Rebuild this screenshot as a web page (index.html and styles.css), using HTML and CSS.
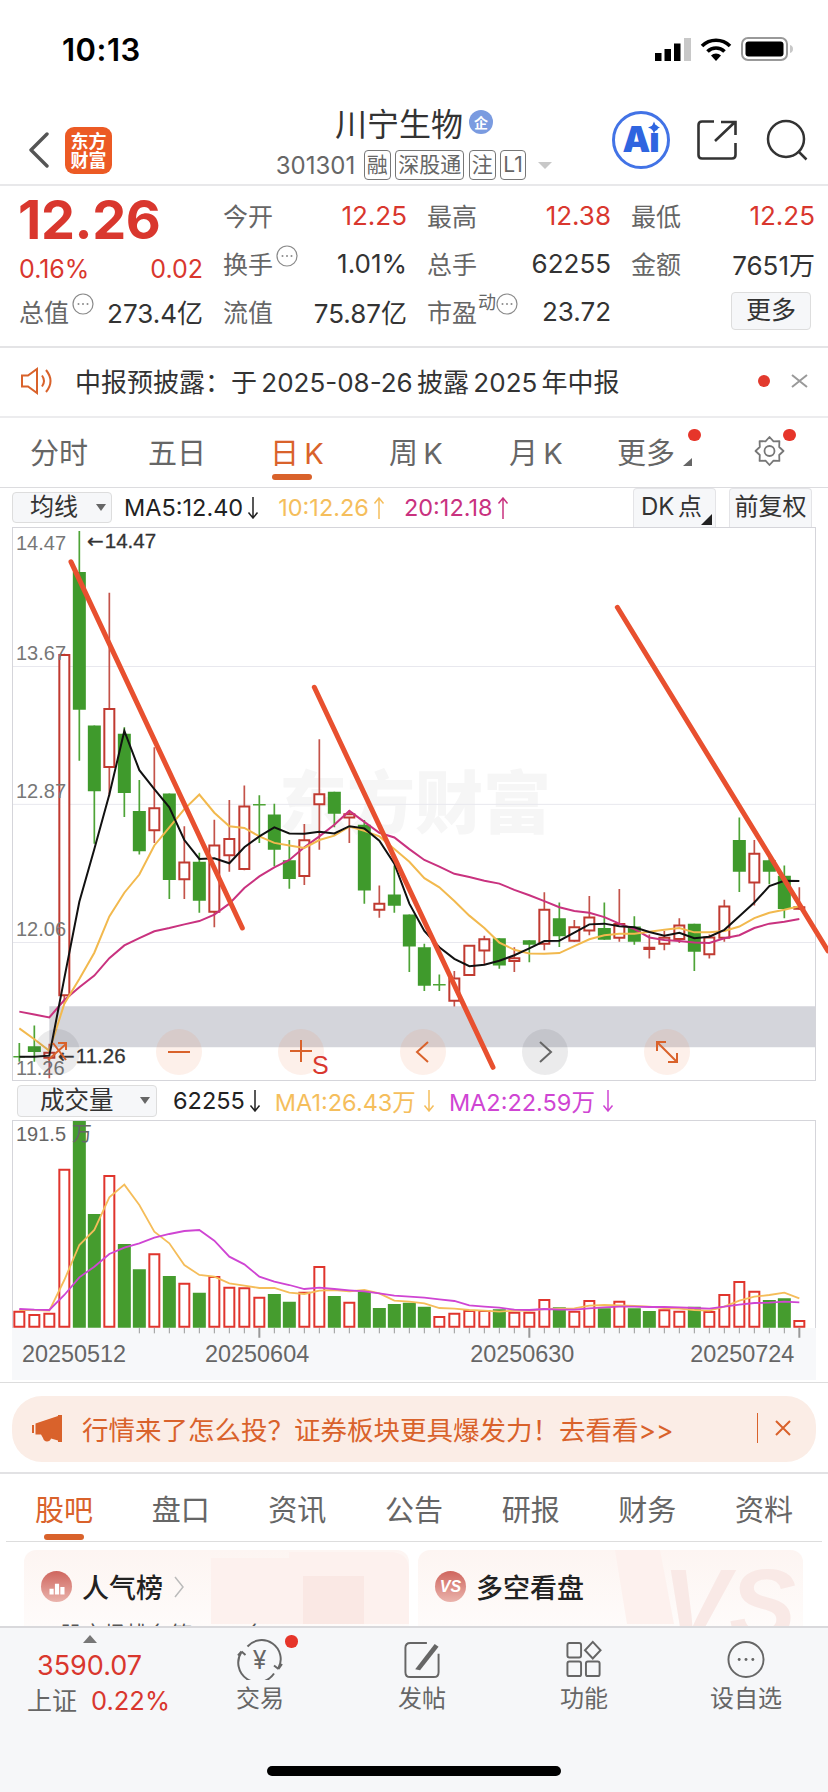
FILE: index.html
```html
<!DOCTYPE html>
<html lang="zh-CN">
<head>
<meta charset="utf-8">
<title>川宁生物</title>
<link rel="stylesheet" href="styles.css">
</head>
<body>
<div class="page">
  <div class="main">
    <div class="status">
      <span class="time">10:13</span>
      <div class="status-icons">
        <svg class="ic-signal" viewBox="0 0 36 23"><path class="k" d="M0 15h6.500v8H0zM9.500 11h6.500v12H9.500zM19 5.500h6.500V23H19z"/><path class="g" d="M29 0h7v23h-7z"/></svg>
        <svg class="ic-wifi" viewBox="0 0 32 24"><path class="wf" d="M2 9A20 20 0 0 1 30 9M7.500 14.500A12 12 0 0 1 24.500 14.500"/><path class="k" d="M11 18.500A7 7 0 0 1 21 18.500L16 24Z"/></svg>
        <svg class="ic-batt" viewBox="0 0 52 24"><rect class="bo" x="1" y="1" width="45" height="22" rx="6"/><rect class="k" x="4.500" y="4.500" width="38" height="15" rx="3"/><path class="g" d="M49 8c2 .5 3 2 3 4s-1 3.500-3 4z"/></svg>
      </div>
    </div>

    <header class="head">
      <div class="head-left">
        <svg class="ic-back" viewBox="0 0 22 36"><path d="M19 2L3 18L19 34"/></svg>
        <div class="logo"><span>东方</span><span>财富</span></div>
      </div>
      <div class="head-mid">
        <div class="name">川宁生物<span class="qi">企</span></div>
        <div class="codes">
          <span class="code">301301</span><span class="tag">融</span><span class="tag">深股通</span><span class="tag">注</span><span class="tag">L1</span><i class="caret"></i>
        </div>
      </div>
      <div class="head-right">
        <svg class="ic-ai" viewBox="0 0 58 58"><circle cx="29" cy="29" r="27.500"/><text x="10.500" y="41" class="ai-t">Ai</text><path class="ai-s" d="M42 10.500l1.800 4.200 4.200 1.800-4.200 1.800-1.800 4.200-1.800-4.200-4.200-1.800 4.200-1.800z"/></svg>
        <svg class="ic-share" viewBox="0 0 40 40"><path d="M17 1.500H5Q1.500 1.500 1.500 5V35Q1.500 38.500 5 38.500H35Q38.500 38.500 38.500 35V23M18 21L38 2M24 2H38.500V15"/></svg>
        <svg class="ic-search" viewBox="0 0 42 42"><circle cx="20" cy="20" r="18"/><path d="M32 32L40.500 40.500"/></svg>
      </div>
    </header>

    <section class="quote">
      <div class="cell price up">12.26</div>
      <div class="cell"><span class="lbl">今开</span><span class="val up">12.25</span></div>
      <div class="cell"><span class="lbl">最高</span><span class="val up">12.38</span></div>
      <div class="cell"><span class="lbl">最低</span><span class="val up">12.25</span></div>

      <div class="cell chg up"><span>0.16%</span><span>0.02</span></div>
      <div class="cell"><span class="lbl">换手<svg class="dots" viewBox="0 0 22 22"><use href="#more"/></svg></span><span class="val">1.01%</span></div>
      <div class="cell"><span class="lbl">总手</span><span class="val">62255</span></div>
      <div class="cell"><span class="lbl">金额</span><span class="val">7651万</span></div>

      <div class="cell"><span class="lbl">总值<svg class="dots" viewBox="0 0 22 22"><use href="#more"/></svg></span><span class="val">273.4亿</span></div>
      <div class="cell"><span class="lbl">流值</span><span class="val">75.87亿</span></div>
      <div class="cell"><span class="lbl">市盈<sup class="dyn">动</sup><svg class="dots tight" viewBox="0 0 22 22"><use href="#more"/></svg></span><span class="val">23.72</span></div>
      <div class="cell end"><span class="more-btn">更多</span></div>
    </section>

    <div class="notice">
      <svg class="ic-speak" viewBox="0 0 33 28"><path d="M2 8.500H8L17 2V26L8 19.500H2ZM22 8.500Q26 14 22 19.500M26 3Q35 14 26 25"/></svg>
      <span class="notice-t">中报预披露：于 2025-08-26 披露 2025 年中报</span>
      <i class="dot"></i>
      <svg class="ic-x" viewBox="0 0 17 14"><path d="M1 1L16 13M16 1L1 13"/></svg>
    </div>

    <nav class="ktabs">
      <span class="kt">分时</span>
      <span class="kt">五日</span>
      <span class="kt on">日 K</span>
      <span class="kt">周 K</span>
      <span class="kt">月 K</span>
      <span class="kt">更多<i class="tri"></i><i class="dot-s d1"></i></span>
      <span class="kt"><svg class="ic-gear" viewBox="0 0 32 32"><path d="M30 16L25.700 20L25.900 25.900L20 25.700L16 30L12 25.700L6.100 25.900L6.300 20L2 16L6.300 12L6.100 6.100L12 6.300L16 2L20 6.300L25.900 6.100L25.700 12Z"/><circle cx="16" cy="16" r="5"/></svg><i class="dot-s d2"></i></span>
    </nav>

    <div class="bar">
      <div class="sel sel-ma">均线<i class="sel-tri"></i></div>
      <span class="ma k5">MA5:12.40<svg class="arr" viewBox="0 0 12 22"><use href="#dn"/></svg></span>
      <span class="ma or">10:12.26<svg class="arr" viewBox="0 0 12 22"><use href="#upa"/></svg></span>
      <span class="ma pk">20:12.18<svg class="arr" viewBox="0 0 12 22"><use href="#upa"/></svg></span>
      <div class="rbtn dk">DK 点<i class="cor"></i></div>
      <div class="rbtn">前复权</div>
    </div>

    <div class="kpanel">
      <div class="wm">东方财富</div>
      <svg class="kchart" viewBox="39 22 2406 1518" preserveAspectRatio="none">
        <path class="band" d="M148 1337H2445V1450H148Z"/>
        <path class="gl" d="M39 403H2445M39 782H2445M39 1162H2445"/>
        <path class="w-g" d="M58 1438V1490M40 1476H75M103 1390V1490M238 30V662M283 565V890M373 570V817M418 715V920M508 752V1042M598 915V1080M778 757V888M759 783H797M823 780V952M868 880V1014M1003 747V845M1093 825V1055M1183 950V1080M1228 1085V1243M1273 1165V1295M1318 1250V1295M1299 1278H1337M1498 1150V1234M1588 1156V1216M1678 1052V1174M1813 1052V1154M1903 1090V1168M2083 1110V1240M2218 818V1023M2308 920V1002M2353 950V1095"/>
        <path class="w-r" d="M148 1440V1535M193 368V1330M328 200V760M463 625V888M553 842V1042M643 824V1120M688 770V967M733 730V963M913 836V1004M958 603V907M1048 798V888M1138 1005V1094M1363 1240V1338M1453 1143V1222M1543 1175V1243M1633 1024V1183M1723 1100V1160M1768 1034V1142M1858 1015V1160M1948 1140V1206M1993 1130V1183M2038 1095V1163M2128 1140V1206M2173 1044V1160M2263 880V1060M2398 1010V1072"/>
        <path class="b-g" d="M83.500 1447h39v16h-39zM218.500 143h39v379h-39zM263.500 565h39v181h-39zM353.500 588h39v163h-39zM398.500 800h39v111h-39zM488.500 752h39v238h-39zM578.500 940h39v107h-39zM803.500 810h39v97h-39zM848.500 936h39v51h-39zM983.500 747h39v61h-39zM1073.500 838h39v181h-39zM1163.500 1030h39v31h-39zM1208.500 1085h39v88h-39zM1253.500 1175h39v106h-39zM1478.500 1150h39v75h-39zM1568.500 1156h39v12h-39zM1658.500 1095h39v50h-39zM1793.500 1122h39v32h-39zM1883.500 1118h39v42h-39zM2063.500 1110h39v77h-39zM2198.500 880h39v87h-39zM2288.500 936h39v31h-39zM2333.500 978h39v92h-39z"/>
        <path class="b-r" d="M133 1465h30v14h-30zM178 371h30v936h-30zM313 520h30v159h-30zM448 793h30v60h-30zM538 942h30v46h-30zM628 895h30v182h-30zM673 877h30v45h-30zM718 788h30v172h-30zM898 881h30v98h-30zM943 754h30v28h-30zM1033 809h30v9h-30zM1123 1055h30v17h-30zM1348 1261h30v61h-30zM1393 1171h30v80h-30zM1438 1153h30v31h-30zM1528 1205h30v8h-30zM1618 1072h30v93h-30zM1708 1120h30v37h-30zM1753 1093h30v36h-30zM1843 1111h30v38h-30zM1933 1176h30v4h-30zM1978 1149h30v16h-30zM2023 1115h30v37h-30zM2113 1148h30v46h-30zM2158 1063h30v86h-30zM2248 918h30v79h-30zM2383 1065h30v4h-30z"/>
        <polyline class="l-pk" points="58,1352 103,1360 148,1368 193,1320 238,1285 283,1253 328,1205 373,1170 418,1150 463,1131 508,1122 553,1112 598,1103 643,1085 688,1055 733,1012 778,980 823,955 868,935 913,900 958,870 1003,838 1048,800 1093,830 1138,860 1183,873 1228,905 1273,935 1318,953 1363,973 1408,982 1453,992 1498,1000 1543,1017 1588,1032 1633,1048 1678,1065 1723,1075 1768,1080 1813,1092 1858,1110 1903,1125 1948,1148 1993,1155 2038,1158 2083,1162 2128,1163 2173,1150 2218,1142 2263,1122 2308,1110 2353,1105 2398,1097"/>
        <polyline class="l-or" points="58,1398 103,1428 148,1460 193,1330 238,1262 283,1190 328,1090 373,1025 418,975 463,895 508,845 553,795 598,755 643,805 688,842 733,847 778,870 823,888 868,895 913,902 958,880 1003,868 1048,843 1093,855 1138,870 1183,905 1228,940 1273,985 1318,1010 1363,1048 1408,1088 1453,1122 1498,1162 1543,1182 1588,1192 1633,1193 1678,1191 1723,1172 1768,1153 1813,1142 1858,1138 1903,1138 1948,1132 1993,1127 2038,1122 2083,1134 2128,1134 2173,1130 2218,1118 2263,1095 2308,1080 2353,1072 2398,1062"/>
        <polyline class="l-k" points="58,1476 103,1476 148,1473 193,1260 238,1050 283,905 328,755 373,580 418,688 463,740 508,790 553,880 598,932 643,930 688,944 733,900 778,870 823,845 868,862 913,863 958,857 1003,862 1048,842 1093,848 1138,882 1183,945 1228,1055 1273,1130 1318,1175 1363,1207 1408,1227 1453,1223 1498,1212 1543,1197 1588,1178 1633,1158 1678,1157 1723,1135 1768,1112 1813,1110 1858,1117 1903,1120 1948,1133 1993,1143 2038,1135 2083,1150 2128,1146 2173,1127 2218,1090 2263,1052 2308,1007 2353,992 2398,993"/>
        <path class="trend" d="M213 115L727 1122M943 460L1479 1505M1852 240L2484 1185"/>
      </svg>
      <span class="pl p1">14.47</span>
      <span class="pl p2">13.67</span>
      <span class="pl p3">12.87</span>
      <span class="pl p4">12.06</span>
      <span class="pl p5">11.26</span>
      <span class="mark m1"><b>←</b>14.47</span>
      <span class="mark m2"><b>←</b>11.26</span>
      <div class="tools">
        <span class="fab grey"><svg viewBox="0 0 46 46"><path class="ot" d="M14 31L32 15M19 14L32 31M24 14H32V21"/></svg></span>
        <span class="fab"><svg viewBox="0 0 46 46"><path class="ot" d="M12 23H34"/></svg></span>
        <span class="fab"><svg viewBox="0 0 46 46"><path class="ot" d="M12 22H34M23 11V33"/></svg><em class="s">S</em></span>
        <span class="fab"><svg viewBox="0 0 46 46"><path class="ot" d="M28 13L17 23L28 33"/></svg></span>
        <span class="fab grey"><svg viewBox="0 0 46 46"><path class="gt" d="M18 13L29 23L18 33"/></svg></span>
        <span class="fab"><svg viewBox="0 0 46 46"><path class="ot" d="M13 13L33 33M13 22V13H22M33 24V33H24"/></svg></span>
      </div>
    </div>

    <div class="bar vbar">
      <div class="sel sel-vol">成交量<i class="sel-tri"></i></div>
      <span class="ma k5">62255<svg class="arr" viewBox="0 0 12 22"><use href="#dn"/></svg></span>
      <span class="ma or">MA1:26.43万<svg class="arr" viewBox="0 0 12 22"><use href="#dn"/></svg></span>
      <span class="ma mg">MA2:22.59万<svg class="arr" viewBox="0 0 12 22"><use href="#dn"/></svg></span>
    </div>

    <div class="vpanel">
      <svg class="vchart" viewBox="39 123 2406 621">
        <path class="b-g2" d="M218.500 123h39v620h-39zM263.500 402h39v341h-39zM353.500 492h39v251h-39zM398.500 568h39v175h-39zM488.500 588h39v155h-39zM578.500 638h39v105h-39zM803.500 642h39v101h-39zM848.500 665h39v78h-39zM983.500 648h39v95h-39zM1073.500 635h39v108h-39zM1118.500 684h39v59h-39zM1163.500 672h39v71h-39zM1208.500 668h39v75h-39zM1253.500 680h39v63h-39zM1478.500 688h39v55h-39zM1658.500 682h39v61h-39zM1793.500 685h39v58h-39zM1883.500 685h39v58h-39zM1928.500 693h39v50h-39zM2063.500 680h39v63h-39zM2288.500 660h39v83h-39zM2333.500 655h39v88h-39z"/>
        <path class="b-r2" d="M43 695h30v45h-30zM88 705h30v35h-30zM133 701h30v39h-30zM178 269h30v471h-30zM313 288h30v452h-30zM448 523h30v217h-30zM538 611h30v129h-30zM628 591h30v149h-30zM673 623h30v117h-30zM718 625h30v115h-30zM763 653h30v87h-30zM898 638h30v102h-30zM943 561h30v179h-30zM1033 668h30v72h-30zM1303 711h30v29h-30zM1348 701h30v39h-30zM1393 693h30v47h-30zM1438 693h30v47h-30zM1528 698h30v42h-30zM1573 698h30v42h-30zM1618 660h30v80h-30zM1708 695h30v45h-30zM1753 663h30v77h-30zM1843 665h30v75h-30zM1978 691h30v49h-30zM2023 695h30v45h-30zM2113 696h30v44h-30zM2158 645h30v95h-30zM2203 606h30v134h-30zM2248 635h30v105h-30zM2383 723h30v17h-30z"/>
        <polyline class="l-or2" points="58,690 103,690 148,692 193,600 238,495 283,450 328,352 373,314 418,375 463,455 508,490 553,555 598,585 643,590 688,610 733,617 778,624 823,624 868,638 913,642 958,632 1003,630 1048,634 1093,630 1138,640 1183,662 1228,665 1273,670 1318,684 1363,686 1408,690 1453,692 1498,695 1543,692 1588,692 1633,687 1678,686 1723,685 1768,677 1813,675 1858,676 1903,678 1948,680 1993,684 2038,686 2083,690 2128,692 2173,680 2218,662 2263,650 2308,645 2353,638 2398,655"/>
        <polyline class="l-mg" points="58,687 103,689 148,690 193,645 238,592 283,560 328,522 373,503 418,490 463,473 508,462 553,453 598,450 643,482 688,530 733,553 778,590 823,605 868,615 913,627 958,623 1003,627 1048,631 1093,634 1138,640 1183,647 1228,650 1273,653 1318,658 1363,663 1408,676 1453,680 1498,683 1543,689 1588,690 1633,687 1678,689 1723,689 1768,685 1813,682 1858,680 1903,680 1948,681 1993,681 2038,682 2083,684 2128,686 2173,680 2218,674 2263,669 2308,668 2353,665 2398,667"/>
        <path class="tick" d="M418 743v17M463 743v17M508 743v17M553 743v17M598 743v17M643 743v17M688 743v17M733 743v17M823 743v17M868 743v17M913 743v17M958 743v17M1003 743v17M1048 743v17M1093 743v17M1138 743v17M1183 743v17M1228 743v17M1273 743v17M1318 743v17M1363 743v17M1408 743v17M1453 743v17M1498 743v17M1543 743v17M1633 743v17M1678 743v17M1723 743v17M1768 743v17M1813 743v17M1858 743v17M1903 743v17M1948 743v17M1993 743v17M2038 743v17M2083 743v17M2128 743v17M2173 743v17M2218 743v17M2263 743v17M2308 743v17M2353 743v17"/>
        <path class="tick-m" d="M778 743v30M1588 743v30M2398 743v30"/>
      </svg>
      <span class="vmax">191.5 万</span>
    </div>
    <div class="dates"><span class="dt dt1">20250512</span><span class="dt dt2">20250604</span><span class="dt dt3">20250630</span><span class="dt dt4">20250724</span></div>

    <div class="promo">
      <svg class="ic-horn" viewBox="0 0 30 27"><path d="M0 10h2v8H0zM3.500 8.500L26 1V0h4v27h-4v-1.500L19 23.500c-.5 2-2 3-4 3s-3.500-1.500-4-3.500L9 19.500H3.500z"/></svg>
      <span class="promo-t">行情来了怎么投？证券板块更具爆发力！去看看&gt;&gt;</span>
      <i class="promo-div"></i>
      <svg class="ic-x2" viewBox="0 0 16 16"><path d="M1 1L15 15M15 1L1 15"/></svg>
    </div>

    <nav class="tabs">
      <span class="tab on">股吧</span><span class="tab">盘口</span><span class="tab">资讯</span><span class="tab">公告</span><span class="tab">研报</span><span class="tab">财务</span><span class="tab">资料</span>
    </nav>

    <div class="cards">
      <div class="card">
        <svg class="card-art" viewBox="0 0 385 74"><path class="a0" d="M187 8H265V2H365Q385 2 385 20V74H187Z"/><path class="a2" d="M279 26H340V74H279Z"/></svg>
        <div class="card-h">
          <span class="cic"><svg viewBox="0 0 24 24"><path d="M3 14h5v7H3zM9.500 8h5v13h-5zM16 12h5v9h-5z"/></svg></span>
          <span class="card-t">人气榜</span>
          <svg class="ic-chev" viewBox="0 0 10 22"><path d="M1 1L9 11L1 21"/></svg>
        </div>
        <div class="card-s">A股市场排名第<span>2027</span>名</div>
      </div>
      <div class="card">
        <svg class="card-art" viewBox="0 0 385 74"><path class="a0" d="M197 0H242L256 74H209Z"/></svg>
        <span class="vs-art">VS</span>
        <div class="card-h">
          <span class="cic cic-vs">VS</span>
          <span class="card-t">多空看盘</span>
        </div>
      </div>
    </div>
  </div>

  <footer class="nav">
    <div class="nav-idx">
      <i class="idx-tri"></i>
      <div class="idx-v">3590.07</div>
      <div class="idx-r"><span>上证</span><span class="idx-p">0.22%</span></div>
    </div>
    <div class="nav-it">
      <svg class="nic nic-y" viewBox="17 6 48 42"><path d="M28.500 14.500A19 19 0 0 1 59.500 36M59.500 37L55 33.500M59.500 37L63 32M55 41.500A19 19 0 0 1 22.500 20M22.500 19.500L19 23.500M22.500 19.500L26.500 23"/><text x="40.700" y="37" class="yen">¥</text></svg>
      <span>交易</span><i class="dot-s d3"></i>
    </div>
    <div class="nav-it">
      <svg class="nic" viewBox="0 0 40 40"><path d="M25 3H8Q3 3 3 8V33Q3 38 8 38H32Q37 38 37 33V14"/><path class="fp" d="M13 30L33 4L37 7L18 31Z"/></svg>
      <span>发帖</span>
    </div>
    <div class="nav-it">
      <svg class="nic" viewBox="0 0 40 40"><rect x="3" y="3" width="14" height="15" rx="2"/><path d="M29 2L37 10.500L29 19L21 10.500Z"/><rect x="3" y="22" width="14" height="15" rx="2"/><rect x="22" y="22" width="14" height="15" rx="2"/></svg>
      <span>功能</span>
    </div>
    <div class="nav-it">
      <svg class="nic" viewBox="0 0 40 40"><circle cx="20" cy="20" r="18"/><circle class="fl" cx="13" cy="20" r="1.500"/><circle class="fl" cx="20" cy="20" r="1.500"/><circle class="fl" cx="27" cy="20" r="1.500"/></svg>
      <span>设自选</span>
    </div>
    <i class="home"></i>
  </footer>
</div>
<svg class="defs" width="0" height="0"><defs>
  <g id="more"><circle cx="11" cy="11" r="10" fill="none" stroke="#8a8a8a" stroke-width="1.200"/><circle cx="6.500" cy="11" r="1" fill="#8a8a8a"/><circle cx="11" cy="11" r="1" fill="#8a8a8a"/><circle cx="15.500" cy="11" r="1" fill="#8a8a8a"/></g>
  <path id="dn" d="M6 0V21M1.500 15.500L6 21L10.500 15.500" fill="none" stroke="currentColor" stroke-width="1.500"/>
  <path id="upa" d="M6 22V1M1.500 6.500L6 1L10.500 6.500" fill="none" stroke="currentColor" stroke-width="1.500"/>
</defs></svg>
</body>
</html>
```
FILE: styles.css
```css
* { box-sizing: border-box; }
html, body { margin: 0; padding: 0; background: #fff; }
body { font-family: Inter, "Noto Sans CJK SC", sans-serif; color: #333; }
i, em { font-style: normal; }
.defs { position: absolute; }
.page { width: 828px; height: 1792px; display: flex; flex-direction: column; overflow: hidden; position: relative; }
.main { flex: 1; overflow: hidden; min-height: 0; }

/* status */
.status { height: 88px; display: flex; justify-content: space-between; align-items: center; padding: 10px 35px 0 62px; }
.time { font-weight: 600; font-size: 31px; color: #000; letter-spacing: .5px; }
.status-icons { display: flex; gap: 9px; align-items: center; }
.ic-signal { width: 36px; height: 23px; }
.ic-wifi { width: 32px; height: 24px; }
.ic-batt { width: 52px; height: 24px; }
.k { fill: #000; }
.g { fill: #c8c8c8; }
.wf { fill: none; stroke: #000; stroke-width: 3.600; }
.bo { fill: none; stroke: #999; stroke-width: 2; }

/* head */
.head { height: 98px; border-bottom: 2px solid #e8e8ea; display: grid; grid-template-columns: 1fr auto 1fr; }
.head-left { display: flex; align-items: center; padding: 28px 0 0 28px; gap: 15px; }
.ic-back { width: 22px; height: 36px; }
.ic-back path { fill: none; stroke: #555; stroke-width: 3.400; stroke-linecap: round; stroke-linejoin: round; }
.logo { width: 47px; height: 47px; border-radius: 9px; background: #ec5a24; color: #fff; font: 700 18px/19px "Noto Sans CJK SC", sans-serif; display: flex; flex-direction: column; align-items: center; justify-content: center; }
.logo span { display: block; }
.head-mid { display: flex; flex-direction: column; align-items: center; padding-top: 12px; }
.name { font: 400 32px/44px "Noto Sans CJK SC", sans-serif; color: #333; display: flex; align-items: center; gap: 6px; }
.qi { width: 24px; height: 24px; border-radius: 50%; background: #7a9be0; color: #fff; font-size: 14px; line-height: 24px; text-align: center; font-weight: 700; }
.codes { display: flex; align-items: center; gap: 4.500px; height: 32px; margin-top: 5px; }
.code { font-size: 24px; color: #666; margin-right: 4px; }
.tag { height: 30px; border: 1px solid #777; border-radius: 4px; padding: 0 2px; font-size: 21px; line-height: 27px; color: #666; }
.caret { width: 0; height: 0; border: 7px solid transparent; border-top: 7px solid #c8c8c8; border-bottom: 0; margin-left: 8px; }
.head-right { display: flex; align-items: flex-start; justify-content: flex-end; padding: 23px 20px 0 0; }
.ic-ai { width: 58px; height: 58px; margin-right: 27px; }
.ic-ai circle { fill: none; stroke: #4273e6; stroke-width: 3; }
.ai-t { font: 900 35px Inter, sans-serif; letter-spacing: -1px; fill: #2f65e0; }
.ai-s { fill: #2f65e0; }
.ic-share { width: 40px; height: 40px; margin: 9px 29px 0 0; }
.ic-share path { fill: none; stroke: #333; stroke-width: 2.600; }
.ic-search { width: 42px; height: 42px; margin-top: 8px; }
.ic-search circle, .ic-search path { fill: none; stroke: #333; stroke-width: 2.500; }

/* quote */
.quote { height: 162px; padding: 5px 13px 0 19px; border-bottom: 2px solid #e4e4e6; display: grid; grid-template-columns: repeat(4, 184px); grid-auto-rows: 48px; column-gap: 20px; }
.cell { display: flex; justify-content: space-between; align-items: center; font-size: 26px; }
.lbl { color: #666; display: flex; align-items: center; font-size: 25px; position: relative; }
.val { color: #333; }
.up, .val.up { color: #d9372e; }
.price { font-size: 54px; font-weight: 700; letter-spacing: -.4px; padding-top: 9px; margin-left: -1px; }
.chg { font-size: 25px; padding-top: 12px; }
.dots { width: 22px; height: 22px; margin: -15px 0 0 3px; }
.dots.tight { margin-left: 0; }
.dyn { font-size: 18px; line-height: 18px; margin: -16px 0 0 1px; color: #666; vertical-align: baseline; }
.end { justify-content: flex-end; padding-right: 4px; }
.more-btn { width: 80px; height: 38px; border: 1px solid #ddd; border-radius: 4px; background: #f6f7f9; text-align: center; line-height: 35px; color: #333; font-size: 25px; }

/* notice */
.notice { height: 70px; display: flex; align-items: center; padding: 0 20px 3px; border-bottom: 2px solid #ececee; }
.ic-speak { width: 33px; height: 28px; }
.ic-speak path { fill: none; stroke: #d9622b; stroke-width: 2; }
.notice-t { font-size: 26px; word-spacing: -3px; margin-left: 22px; color: #333; flex: 1; }
.dot { width: 12px; height: 12px; border-radius: 50%; background: #e23a2e; }
.ic-x { width: 17px; height: 14px; margin-left: 21px; }
.ic-x path { fill: none; stroke: #999; stroke-width: 2; }

/* k tabs */
.ktabs { height: 70px; border-bottom: 1px solid #dcdcdf; font-size: 29px; color: #666; display: grid; grid-template-columns: 118px 122px 119px 120px 108px 135px 1fr; align-items: center; padding: 0 0 4px 30px; }
.kt { position: relative; white-space: nowrap; word-spacing: -3px; }
.kt.on { color: #d9622b; }
.kt.on::after { content: ""; position: absolute; left: 2px; top: 44px; width: 40px; height: 6px; border-radius: 3px; background: #d9622b; }
.tri { position: absolute; left: 66px; top: 28px; width: 0; height: 0; border-left: 9px solid transparent; border-bottom: 8px solid #666; }
.dot-s { position: absolute; width: 12.500px; height: 12.500px; border-radius: 50%; background: #e6352a; }
.d1 { left: 71px; top: -1px; }
.d2 { left: 31px; top: -6px; }
.ic-gear { width: 35px; height: 32px; display: block; }
.ic-gear path, .ic-gear circle { fill: none; stroke: #777; stroke-width: 1.800; stroke-linejoin: round; }

/* chart bars */
.bar { height: 39px; display: flex; align-items: center; padding: 0 16px 0 12px; }
.sel { position: relative; height: 31px; border: 1px solid #ddd; border-radius: 4px; background: #f6f7f9; color: #333; font-size: 24px; line-height: 28px; }
.sel-ma { width: 100px; padding-left: 17px; margin: 0 12px 0 0; }
.sel-tri { position: absolute; right: 5px; top: 11px; width: 0; height: 0; border: 5px solid transparent; border-top: 7px solid #666; border-bottom: 0; }
.ma { font-size: 23.500px; margin-right: 19px; white-space: nowrap; display: flex; align-items: center; }
.arr { width: 12px; height: 22px; margin-left: 4px; }
.k5 { color: #222; }
.or { color: #f5be5c; }
.pk { color: #c9327f; }
.mg { color: #cf45d3; }
.rbtn { height: 39px; width: 83px; border: 1px solid #e4e4e7; border-bottom: 0; border-radius: 4px 4px 0 0; background: #f6f7f9; color: #333; font-size: 24px; line-height: 36px; text-align: center; position: relative; word-spacing: -3px; }
.dk { margin-left: auto; margin-right: 13px; padding-right: 6px; }
.cor { position: absolute; right: 3px; bottom: 2px; width: 0; height: 0; border-left: 11px solid transparent; border-bottom: 11px solid #222; }

/* k panel */
.kpanel { position: relative; margin: 0 12px; height: 554px; border: 1px solid #d5d5da; }
.kchart { position: relative; z-index: 1; display: block; width: 802px; height: 552px; overflow: visible; }
.kchart path, .kchart polyline, .vchart path, .vchart polyline { vector-effect: non-scaling-stroke; }
.band { fill: #d4d5db; }
.gl { fill: none; stroke: #e8e8ee; stroke-width: 1; }
.w-g { fill: none; stroke: #4ea437; stroke-width: 1.700; }
.w-r { fill: none; stroke: #c4534a; stroke-width: 1.700; }
.b-g { fill: #3f9a2c; }
.b-r { fill: #fff; stroke: #c03a30; stroke-width: 2; }
.l-pk { fill: none; stroke: #c9327f; stroke-width: 2; }
.l-or { fill: none; stroke: #f2b94e; stroke-width: 2; }
.l-k { fill: none; stroke: #111; stroke-width: 2; }
.trend { fill: none; stroke: #e8502f; stroke-width: 5; stroke-linecap: round; }
.wm { position: absolute; left: 266px; top: 231px; font: 900 68px/80px "Noto Sans CJK SC", sans-serif; color: #f6f6f6; white-space: nowrap; }
.pl, .mark, .vmax, .dates { font-family: "Liberation Sans", sans-serif; }
.pl { position: absolute; z-index: 2; left: 3px; font-size: 20px; line-height: 24px; color: #777; }
.p1 { top: 3px; }
.p2 { top: 113px; }
.p3 { top: 251px; }
.p4 { top: 389px; }
.p5 { top: 528px; }
.mark { position: absolute; z-index: 2; font-size: 20.500px; line-height: 24px; color: #333; -webkit-text-stroke: .3px #333; }
.mark b { font: 400 20px "DejaVu Sans", sans-serif; margin-right: 1px; }
.m1 { left: 74px; top: 1px; }
.m2 { left: 45px; top: 516px; }
.tools { position: absolute; z-index: 3; left: 21px; top: 501px; display: flex; gap: 76px; }
.fab { position: relative; width: 46px; height: 46px; border-radius: 50%; background: rgba(238, 130, 80, .12); display: block; }
.fab.grey { background: rgba(60, 60, 70, .1); }
.fab svg { display: block; width: 46px; height: 46px; }
.ot { fill: none; stroke: #d9622b; stroke-width: 2; }
.gt { fill: none; stroke: #666; stroke-width: 2; }
.s { position: absolute; left: 34px; top: 22px; font: 400 25px "Liberation Sans", sans-serif; color: #d9372e; }

/* volume */
.vbar { padding-left: 17px; }
.sel-vol { width: 140px; height: 32px; padding-left: 22px; margin-right: 16px; font-size: 24.500px; }
.sel-vol .sel-tri { right: 6px; }
.vbar .ma { margin-right: 14px; }
.vbar .ma.or .arr, .vbar .ma.mg .arr { margin-left: 7px; }
.vpanel { position: relative; margin: 0 12px; height: 208px; border: 1px solid #d5d5da; border-bottom: 0; }
.vchart { position: relative; z-index: 1; display: block; width: 802px; height: 207px; overflow: visible; }
.b-g2 { fill: #459c2e; }
.b-r2 { fill: #fff; stroke: #e0352d; stroke-width: 2; }
.l-or2 { fill: none; stroke: #f5bd5a; stroke-width: 1.800; }
.l-mg { fill: none; stroke: #cf45d3; stroke-width: 1.800; }
.tick { fill: none; stroke: #999; stroke-width: 1; }
.tick-m { fill: none; stroke: #999; stroke-width: 2; }
.vmax { position: absolute; z-index: 2; left: 3px; top: 1px; font-size: 20px; line-height: 24px; color: #666; }
.dates { height: 52px; margin: 0 12px 2px; background: #f7f8fa; display: flex; align-items: center; padding-left: 10px; font-size: 23.400px; color: #666; }
.dt2 { margin-left: 79px; }
.dt3 { margin-left: 161px; }
.dt4 { margin-left: 116px; }

/* promo */
.promo { height: 78px; border-top: 1px solid #ddd; padding-top: 13px; position: relative; display: flex; align-items: center; }
.promo::before { content: ""; position: absolute; left: 12px; right: 12px; top: 13px; height: 66px; border-radius: 30px; background: #fbede6; }
.ic-horn { position: relative; width: 30px; height: 27px; margin-left: 32px; fill: #d9622b; }
.promo-t { position: relative; font-size: 26.500px; color: #d9622b; margin-left: 20px; flex: 1; white-space: nowrap; }
.promo-div { position: relative; width: 1px; height: 30px; background: #d9622b; }
.ic-x2 { position: relative; width: 16px; height: 16px; margin: 0 37px 0 17px; }
.ic-x2 path { fill: none; stroke: #d9622b; stroke-width: 2; }

/* tabs */
.tabs { margin-top: 12px; height: 70px; border-top: 2px solid #e2e2e4; display: flex; justify-content: space-between; align-items: center; padding: 0 35px; font-size: 29px; color: #666; position: relative; }
.tabs::after { content: ""; position: absolute; left: 6px; right: 6px; bottom: 0; height: 1px; background: #ddd; }
.tab { position: relative; }
.tab.on { color: #d9622b; }
.tab.on::after { content: ""; position: absolute; left: 9px; top: 47px; width: 40px; height: 6px; border-radius: 3px; background: #d9622b; }

/* cards */
.cards { display: flex; gap: 9px; padding: 8px 24px 0; }
.card { position: relative; width: 385px; height: 120px; border-radius: 12px; background: linear-gradient(#fdf5f2, #fff); overflow: hidden; padding: 21px 0 0 17px; }
.card-art { position: absolute; left: 0; top: 0; width: 385px; height: 74px; }
.a0 { fill: #fdf1ee; }
.a2 { fill: #fae8e4; }
.vs-art { position: absolute; right: 7px; top: -6px; font: italic 700 100px/120px "Liberation Sans", sans-serif; color: #f9e9e6; }
.card-h { position: relative; display: flex; align-items: center; height: 31px; }
.cic { width: 31px; height: 31px; border-radius: 50%; background: linear-gradient(#cf665e, #eab3ac); display: flex; align-items: center; justify-content: center; }
.cic svg { width: 20px; height: 20px; fill: #fff; }
.cic-vs { color: #fff; font: italic 700 16px/31px "Liberation Sans", sans-serif; }
.card-t { font: 500 27px/31px "Noto Sans CJK SC", sans-serif; color: #222; margin-left: 10px; }
.ic-chev { width: 10px; height: 22px; margin-left: 11px; }
.ic-chev path { fill: none; stroke: #bbb; stroke-width: 1.500; }
.card-s { position: relative; margin: 17px 0 0 4px; font-size: 22px; line-height: 30px; color: #555; }
.card-s span { color: #e0662c; }

/* nav */
.nav { position: relative; height: 166px; flex: none; background: #f6f7f9; border-top: 2px solid #d9d9dc; display: flex; padding: 12px 0 0 0; }
.nav-idx { position: relative; width: 179px; padding-top: 11px; }
.idx-tri { position: absolute; left: 83px; top: -5px; width: 0; height: 0; border: 7px solid transparent; border-bottom: 8px solid #777; border-top: 0; }
.idx-v { font-size: 27px; line-height: 30px; color: #d9372e; padding-left: 37px; }
.idx-r { display: flex; align-items: center; padding-left: 27px; margin-top: 3px; font-size: 25px; color: #666; line-height: 34px; }
.idx-p { color: #d9372e; font-size: 25.500px; margin-left: 14px; }
.nav-it { position: relative; width: 162px; display: flex; flex-direction: column; align-items: center; font-size: 24px; color: #666; }
.nic { width: 40px; height: 39px; }
.nic-y { width: 48px; height: 42px; margin: -2px 0 -1px; }
.nav-it span { margin-top: 3px; line-height: 34px; }
.nic path, .nic rect, .nic circle { fill: none; stroke: #666; stroke-width: 2; }
.nic path.fp { fill: #666; stroke: none; }
.nic circle.fl { fill: #666; stroke: none; }
.yen { font: 400 25px Inter, sans-serif; fill: #666; text-anchor: middle; }
.d3 { left: 106px; top: -5px; }
.home { position: absolute; left: 267px; top: 138px; width: 294px; height: 10px; border-radius: 5px; background: #000; }
```
